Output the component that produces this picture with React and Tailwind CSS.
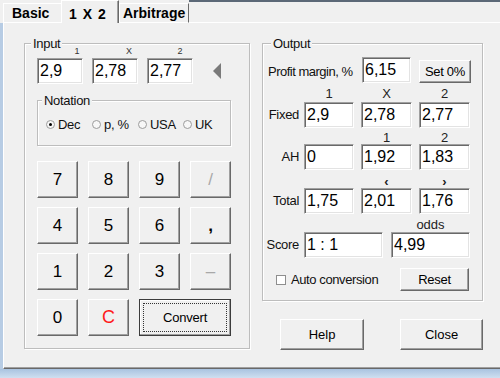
const FONT = "font-['Liberation_Sans',Arial,sans-serif]";

const Field = ({ value, className = '' }) => (
  <div
    className={`h-[26px] bg-white flex items-center pl-[2px] text-[16px] leading-none text-black border border-t-[#a0a0a0] border-l-[#a0a0a0] border-r-white border-b-white shadow-[inset_1px_1px_0_#696969,inset_-1px_-1px_0_#e3e3e3] ${className}`}
  >
    {value}
  </div>
);

const Btn = ({ children, className = '' }) => (
  <div
    className={`flex items-center justify-center bg-[#f0f0f0] border border-t-white border-l-white border-r-[#696969] border-b-[#696969] shadow-[inset_-1px_-1px_0_#a0a0a0] ${className}`}
  >
    {children}
  </div>
);

const Group = ({ label, labelLeft, className = '', children }) => (
  <div
    className={`relative border border-[#bdbdbd] shadow-[inset_1px_1px_0_#fff,1px_1px_0_#fff] ${className}`}
  >
    <span
      className={`absolute -top-[8px] ${labelLeft} px-[2px] bg-[#f0f0f0] text-[13px] leading-[15px] tracking-[-0.3px] text-[#111]`}
    >
      {label}
    </span>
    {children}
  </div>
);

const Radio = ({ label, checked, className }) => (
  <div className={`flex items-center ${className}`}>
    <span className="w-[9px] h-[9px] rounded-full border border-[#9c9c9c] bg-[#f7f7f7] flex items-center justify-center">
      {checked && <span className="w-[3px] h-[3px] rounded-full bg-black" />}
    </span>
    <span className="ml-[3px]">{label}</span>
  </div>
);

const keys = [
  { k: '7' }, { k: '8' }, { k: '9' }, { k: '/', dim: true },
  { k: '4' }, { k: '5' }, { k: '6' }, { k: ',', heavy: true },
  { k: '1' }, { k: '2' }, { k: '3' }, { k: '–', dim: true },
];

function Row({ label, children }) {
  return (
    <div className="flex items-center">
      <span className="w-[36px] text-right text-[13px] tracking-[-0.3px] text-[#111]">{label}</span>
      {children}
    </div>
  );
}

function Head({ a, b, c, className = '' }) {
  return (
    <div className={`flex h-[12px] text-[13px] leading-[12px] text-[#222] ${className}`}>
      <span className="w-[36px]" />
      <span className="ml-[5px] w-[50px] text-center">{a}</span>
      <span className="ml-[7px] w-[51px] text-center">{b}</span>
      <span className="ml-[7px] w-[51px] text-center">{c}</span>
    </div>
  );
}

export default function App() {
  return (
    <div className={`w-[500px] h-[378px] bg-[#f0f0f0] overflow-hidden flex flex-col ${FONT} text-black`}>
      {/* Tabs */}
      <div className="h-[23px] flex items-end">
        <div className="w-[3px] self-stretch" />
        <div className="w-[58px] h-[20px] flex items-center pl-[8px] border-t border-l border-b border-white text-[14px] font-bold">
          Basic
        </div>
        <div className="w-[58px] h-[23px] flex items-start pt-[3px] pl-[7px] border-t border-l border-r border-t-white border-l-white border-r-[#696969] shadow-[inset_-1px_0_0_#a0a0a0] text-[14px] font-bold [word-spacing:2px]">
          1 X 2
        </div>
        <div className="w-[70px] h-[20px] flex items-center pl-[3px] border-t border-l border-r border-b border-t-white border-l-white border-b-white border-r-[#696969] text-[14px] font-bold">
          Arbitrage
        </div>
        <div className="flex-1 self-stretch flex flex-col border-b border-white">
          <div className="h-[2px] bg-[#5b6877]" />
        </div>
      </div>

      {/* Body */}
      <div className="h-[346px] flex">
        <div className="w-[3px] bg-[#b7cce4]" />
        <div className="flex-1 flex items-start pl-[20px] pt-[20px] border-l border-b border-l-white border-b-[#696969] shadow-[inset_0_-1px_0_#a0a0a0]">
          {/* Input */}
          <Group label="Input" labelLeft="left-[6px]" className="w-[226px] h-[306px] flex flex-col">
            <div className="mt-[2px] h-[10px] flex text-[9px] leading-[10px] text-[#333]">
              <span className="ml-[47px] w-[10px] text-center">1</span>
              <span className="ml-[42px] w-[10px] text-center">X</span>
              <span className="ml-[41px] w-[10px] text-center">2</span>
            </div>
            <div className="mt-[2px] flex items-center pl-[12px]">
              <Field value="2,9" className="w-[46px]" />
              <Field value="2,78" className="w-[46px] ml-[9px]" />
              <Field value="2,77" className="w-[46px] ml-[9px]" />
              <svg className="ml-[20px]" width="8" height="16" viewBox="0 0 8 16">
                <polygon points="0,8 8,0 8,16" fill="#7a7a7a" />
              </svg>
            </div>
            <Group label="Notation" labelLeft="left-[4px]" className="mt-[16px] ml-[12px] w-[194px] h-[46px]">
              <div className="mt-[16px] h-[15px] flex items-center pl-[8px] text-[13px] tracking-[-0.3px] text-[#111]">
                <Radio label="Dec" checked className="w-[46px]" />
                <Radio label="p, %" className="w-[46px]" />
                <Radio label="USA" className="w-[45px]" />
                <Radio label="UK" />
              </div>
            </Group>
            <div className="mt-[15px] ml-[12px] grid grid-cols-[41px_41px_41px_41px] auto-rows-[37px] gap-x-[10px] gap-y-[9px]">
              {keys.map(({ k, dim, heavy }) => (
                <Btn
                  key={k}
                  className={`text-[17px] ${dim ? 'text-[#a8a8a8]' : 'text-black'} ${heavy ? 'font-bold' : ''}`}
                >
                  {k}
                </Btn>
              ))}
              <Btn className="text-[17px]">0</Btn>
              <Btn className="text-[18px] text-[#ff1a1a]">C</Btn>
              <div className="col-span-2 p-[3px] border border-[#3c3c3c] bg-[#f0f0f0] shadow-[inset_-1px_-1px_0_#a0a0a0,inset_1px_1px_0_#fff]">
                <div className="h-full border border-dotted border-[#333] flex items-center justify-center text-[13px] tracking-[-0.2px]">
                  Convert
                </div>
              </div>
            </div>
          </Group>

          {/* Output */}
          <div className="ml-[12px] flex flex-col">
            <Group label="Output" labelLeft="left-[8px]" className="w-[221px] h-[258px] flex flex-col">
              <div className="mt-[13px] pl-[5px] flex items-start">
                <span className="w-[94px] mt-[7px] text-[13px] leading-[15px] tracking-[-0.5px] text-[#111]">
                  Profit margin, %
                </span>
                <Field value="6,15" className="w-[49px]" />
                <Btn className="ml-[8px] mt-[3px] w-[52px] h-[23px] text-[13px] tracking-[-0.3px]">Set 0%</Btn>
              </div>
              <Head a="1" b="X" c="2" className="mt-[5px]" />
              <div className="mt-[2px]">
                <Row label="Fixed">
                  <Field value="2,9" className="ml-[5px] w-[50px]" />
                  <Field value="2,78" className="ml-[7px] w-[51px]" />
                  <Field value="2,77" className="ml-[7px] w-[51px]" />
                </Row>
              </div>
              <Head a="" b="1" c="2" className="mt-[4px]" />
              <Row label="AH">
                <Field value="0" className="ml-[5px] w-[50px]" />
                <Field value="1,92" className="ml-[7px] w-[51px]" />
                <Field value="1,83" className="ml-[7px] w-[51px]" />
              </Row>
              <Head a="" b="‹" c="›" className="mt-[6px] font-bold" />
              <Row label="Total">
                <Field value="1,75" className="ml-[5px] w-[50px]" />
                <Field value="2,01" className="ml-[7px] w-[51px]" />
                <Field value="1,76" className="ml-[7px] w-[51px]" />
              </Row>
              <div className="mt-[5px] h-[12px] flex text-[13px] leading-[12px] text-[#222]">
                <span className="ml-[128px] w-[79px] text-center">odds</span>
              </div>
              <div className="mt-[1px]">
                <Row label="Score">
                  <Field value="1 : 1" className="ml-[5px] w-[79px]" />
                  <Field value="4,99" className="ml-[8px] w-[79px]" />
                </Row>
              </div>
              <div className="mt-[10px] pl-[13px] flex items-center">
                <div className="w-[124px] flex items-center">
                  <span className="w-[10px] h-[10px] bg-white border border-[#8e8e8e]" />
                  <span className="ml-[5px] text-[13px] tracking-[-0.4px] text-[#111]">Auto conversion</span>
                </div>
                <Btn className="w-[69px] h-[23px] text-[13px] tracking-[-0.3px]">Reset</Btn>
              </div>
            </Group>
            <div className="mt-[18px] flex">
              <Btn className="ml-[18px] w-[84px] h-[31px] text-[13px]">Help</Btn>
              <Btn className="ml-[36px] w-[83px] h-[31px] text-[13px]">Close</Btn>
            </div>
          </div>
        </div>
      </div>

      <div className="flex-1 bg-gradient-to-b from-[#a9c3e0] to-[#cfdff0]" />
    </div>
  );
}
